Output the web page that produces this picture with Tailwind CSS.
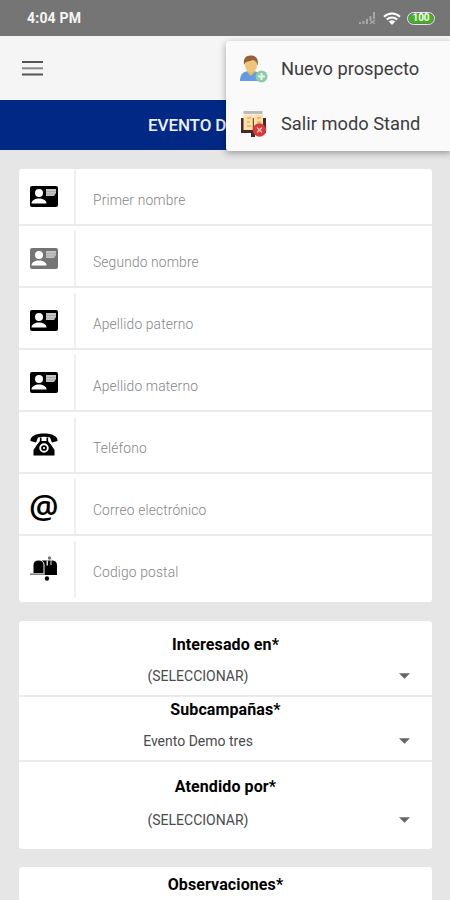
<!DOCTYPE html>
<html lang="es">
<head>
    <meta charset="UTF-8">
    <title>Evento Demo Tres</title>
    <script src="https://cdn.jsdelivr.net/npm/@tailwindcss/browser@4"></script>
</head>
<body class="bg-[#e6e6e6] font-['Roboto',sans-serif]">

<!-- Icons shared by the form rows -->
<svg class="hidden">
    <symbol id="card" viewBox="0 0 28 21">
        <rect width="28" height="21" rx="2" fill="currentColor"/>
        <circle cx="9" cy="7" r="4" fill="#fff"/>
        <path d="M1.500 17.500c0-3.200 4-5 7.500-5s7.500 1.800 7.500 5z" fill="#fff"/>
        <path d="M16 3h10v4l-2 3h-8z" fill="#c4c4c4"/>
        <path d="M16 5.500h10M16 8h9" stroke="#999" stroke-width=".6"/>
    </symbol>
    <symbol id="caret" viewBox="0 0 10 5">
        <path d="M0 0h10L5 5z" fill="#666"/>
    </symbol>
</svg>

<div class="relative h-[900px] w-[450px] overflow-hidden">

    <!-- Status bar -->
    <div class="flex h-9 items-center justify-between bg-[#757575] pl-[27px] pr-[15px] text-white">
        <span class="text-sm font-bold tracking-[0.2px] text-[#f5f5f5]">4:04 PM</span>
        <div class="flex items-center">
            <svg class="mr-[7px] h-3 w-[17px]" viewBox="0 0 17 12" fill="#a8a8a8">
                <path d="M0 10h2v2H0zM3.500 9h2v3h-2zM7 7h2v5H7zM10.500 4h2v4h-2zM14 0h2v7h-2z"/>
                <path d="M11 8l5 4M16 8l-5 4" stroke="#a8a8a8" stroke-width="1.300"/>
            </svg>
            <svg class="mr-[6px] h-[13px] w-[18px]" viewBox="0 0 18 13" fill="none" stroke="#fff" stroke-width="2">
                <path d="M1 4.800c4.500-4.400 11.500-4.400 16 0M3.800 7.600c3-2.800 7.400-2.800 10.400 0"/>
                <path d="M5.700 9.400c2-1.600 4.600-1.600 6.600 0L9 13z" fill="#fff" stroke="none"/>
            </svg>
            <div class="flex h-[13px] w-7 items-center justify-center rounded-full border border-[#e8e8e8] p-px">
                <span class="flex h-full w-full items-center justify-center rounded-full bg-[#3fb618] text-[10px] leading-none font-bold">100</span>
            </div>
        </div>
    </div>

    <!-- Toolbar -->
    <div class="flex h-16 items-center bg-[#f5f5f5] pl-[22px]">
        <svg class="h-[15px] w-[21px]" viewBox="0 0 21 15" stroke-width="2">
            <path d="M0 1h21M0 13.500h21" stroke="#555"/>
            <path d="M0 7.300h21" stroke="#888"/>
        </svg>
    </div>

    <div class="flex h-[50px] items-center bg-[#002884] pt-0.5 pl-[148px] text-[17px] font-medium tracking-[-0.1px] text-[#eef0fa]">EVENTO DEMO</div>

    <!-- Form -->
    <div class="mt-[19px] ml-[19px] w-[413px] rounded-[3px] bg-white pb-[5px] text-[13.800px] font-light tracking-[0.15px] text-[#858585]">
        <div class="flex h-[57px] border-b-2 border-[#ebebeb]">
            <div class="flex w-[57px] items-center justify-center border-r-2 border-[#f0f0f0] pr-[5px]"><svg class="h-[21px] w-7 text-black"><use href="#card"/></svg></div>
            <div class="pt-[21px] pl-[17px]">Primer nombre</div>
        </div>
        <div class="flex h-[62px] border-b-2 border-[#ebebeb] pt-[5px]">
            <div class="flex w-[57px] items-center justify-center border-r-2 border-[#f0f0f0] pr-[5px]"><svg class="h-[21px] w-7 text-[#747474]"><use href="#card"/></svg></div>
            <div class="pt-[21px] pl-[17px]">Segundo nombre</div>
        </div>
        <div class="flex h-[62px] border-b-2 border-[#ebebeb] pt-[5px]">
            <div class="flex w-[57px] items-center justify-center border-r-2 border-[#f0f0f0] pr-[5px]"><svg class="h-[21px] w-7 text-black"><use href="#card"/></svg></div>
            <div class="pt-[21px] pl-[17px]">Apellido paterno</div>
        </div>
        <div class="flex h-[62px] border-b-2 border-[#ebebeb] pt-[5px]">
            <div class="flex w-[57px] items-center justify-center border-r-2 border-[#f0f0f0] pr-[5px]"><svg class="h-[21px] w-7 text-black"><use href="#card"/></svg></div>
            <div class="pt-[21px] pl-[17px]">Apellido materno</div>
        </div>
        <div class="flex h-[62px] border-b-2 border-[#ebebeb] pt-[5px]">
            <div class="flex w-[57px] items-center justify-center border-r-2 border-[#f0f0f0] pr-[5px]">
                <svg class="h-[23px] w-7" viewBox="0 0 28 23">
                    <path d="M.5 8C0 3 6 .5 14 .5S28 3 27.500 8l-5.500 1.500-2-5c-4-1-8-1-12 0l-2 5z"/>
                    <path d="M9.500 4.500h2V8h5V4.500h2V8l6 9v5.500h-21V17l6-9z"/>
                    <path d="M9.500 4.500V8L7 11M18.500 4.500V8l2.500 3" fill="none" stroke="#fff" stroke-width=".8"/>
                    <circle cx="14" cy="15" r="3.800" stroke="#fff" stroke-width="1.900"/>
                    <circle cx="14" cy="15" r="1.100" fill="#fff"/>
                </svg>
            </div>
            <div class="pt-[21px] pl-[17px]">Teléfono</div>
        </div>
        <div class="flex h-[62px] border-b-2 border-[#ebebeb] pt-[5px]">
            <div class="flex w-[57px] items-center justify-center border-r-2 border-[#f0f0f0] pr-[5px] pb-[3px] font-['Open_Sans',sans-serif] text-[33px] leading-none font-semibold text-black">@</div>
            <div class="pt-[21px] pl-[17px]">Correo electrónico</div>
        </div>
        <div class="flex h-[61px] pt-[5px]">
            <div class="flex w-[57px] items-center justify-center border-r-2 border-[#f0f0f0] pr-[5px] pb-0.5">
                <svg class="h-[25px] w-7" viewBox="0 0 28 25">
                    <path d="M3.500 17V9q0-4.500 5-4.500T13.500 9v8z"/>
                    <path d="M0 17.500h14v1.300H0z" fill="#666"/>
                    <path d="M11.500 4.500H22q5 0 5 5V19H14.500V9q0-3-3-4.500z"/>
                    <path d="M16.500 4.500h1.500v5h-1.500zM20.500 2h1v7h-1z" fill="#ddd"/>
                    <circle cx="19.500" cy="2" r="1.700" fill="#777"/>
                    <circle cx="17" cy="22.500" r="2.200"/>
                </svg>
            </div>
            <div class="pt-[21px] pl-[17px]">Codigo postal</div>
        </div>
    </div>

    <!-- Selects -->
    <div class="mt-[19px] ml-[19px] w-[413px] rounded-[3px] bg-white text-center text-[14px] text-[#4a4a4a]">
        <div class="h-[76px] border-b-2 border-[#ebebeb] pt-3">
            <div class="text-base leading-6 font-bold tracking-[0.1px] text-black">Interesado en*</div>
            <div class="flex items-center pt-[9px] pr-[22px] leading-5">
                <span class="w-[358px]">(SELECCIONAR)</span>
                <svg class="ml-auto h-[6px] w-[11px]"><use href="#caret"/></svg>
            </div>
        </div>
        <div class="h-[65px] border-b-2 border-[#ebebeb] pt-px">
            <div class="text-base leading-6 font-bold tracking-[0.1px] text-black">Subcampañas*</div>
            <div class="flex items-center pt-[9px] pr-[22px] leading-5">
                <span class="w-[358px]">Evento Demo tres</span>
                <svg class="ml-auto h-[6px] w-[11px]"><use href="#caret"/></svg>
            </div>
        </div>
        <div class="h-[87px] pt-[13px]">
            <div class="text-base leading-6 font-bold tracking-[0.1px] text-black">Atendido por*</div>
            <div class="flex items-center pt-[11px] pr-[22px] leading-5">
                <span class="w-[358px]">(SELECCIONAR)</span>
                <svg class="ml-auto h-[6px] w-[11px]"><use href="#caret"/></svg>
            </div>
        </div>
    </div>

    <div class="mt-[18px] ml-[19px] h-20 w-[413px] rounded-[3px] bg-white pt-[6px] text-center text-base leading-6 font-bold tracking-[0.1px] text-black">Observaciones*</div>

    <!-- Overflow menu -->
    <div class="absolute top-[41px] left-[226px] h-[110px] w-[226px] rounded-[3px] bg-[#fafafa] text-[18.300px] text-[#3c3c3c] shadow-[0_2px_7px_rgba(0,0,0,0.35)]">
        <div class="flex h-[55px] items-center pl-[13px]">
            <svg class="mr-[13px] h-7 w-[29px]" viewBox="0 0 29 28">
                <path d="M1 26c0-7 3-9 8-10h6c5 1 8 4 8 10z" fill="#659be0"/>
                <path d="M8 13h8v4l-4 4-4-4z" fill="#e5b665"/>
                <ellipse cx="12" cy="9.500" rx="6" ry="8" fill="#efc57c"/>
                <path d="M5 10C4 3 7 .5 12 .5S20 4 18.500 11C18 7 16 5.500 14 5 10 7 7 5 5 10z" fill="#95603b"/>
                <circle cx="22.500" cy="21.500" r="6" fill="#8ccba3"/>
                <path d="M19 21.500h7M22.500 18v7" stroke="#e2f7e9" stroke-width="2"/>
            </svg>
            <span>Nuevo prospecto</span>
        </div>
        <div class="flex h-[55px] items-center pl-[13px]">
            <svg class="mr-[13px] h-7 w-[29px]" viewBox="0 0 29 28">
                <path d="M2 8h25v15H16v4h-4v-4H2z" fill="#432c2b"/>
                <path d="M4.500 1h19v3h-19z" fill="#bbb"/>
                <path d="M4.500 4.500h9.300V20H4.500zM14.800 4.500H24V20h-9.200z" fill="#ffdfaa"/>
                <path d="M8 8h4M8 12h3M8 16h4M18 8h4M18 12h4" stroke="#f6b46c" stroke-width="2"/>
                <circle cx="20.500" cy="20" r="6.700" fill="#d93a39"/>
                <path d="M18 17.500l5 5M23 17.500l-5 5" stroke="#ffc1bd" stroke-width="1.300"/>
            </svg>
            <span>Salir modo Stand</span>
        </div>
    </div>
</div>

</body>
</html>
